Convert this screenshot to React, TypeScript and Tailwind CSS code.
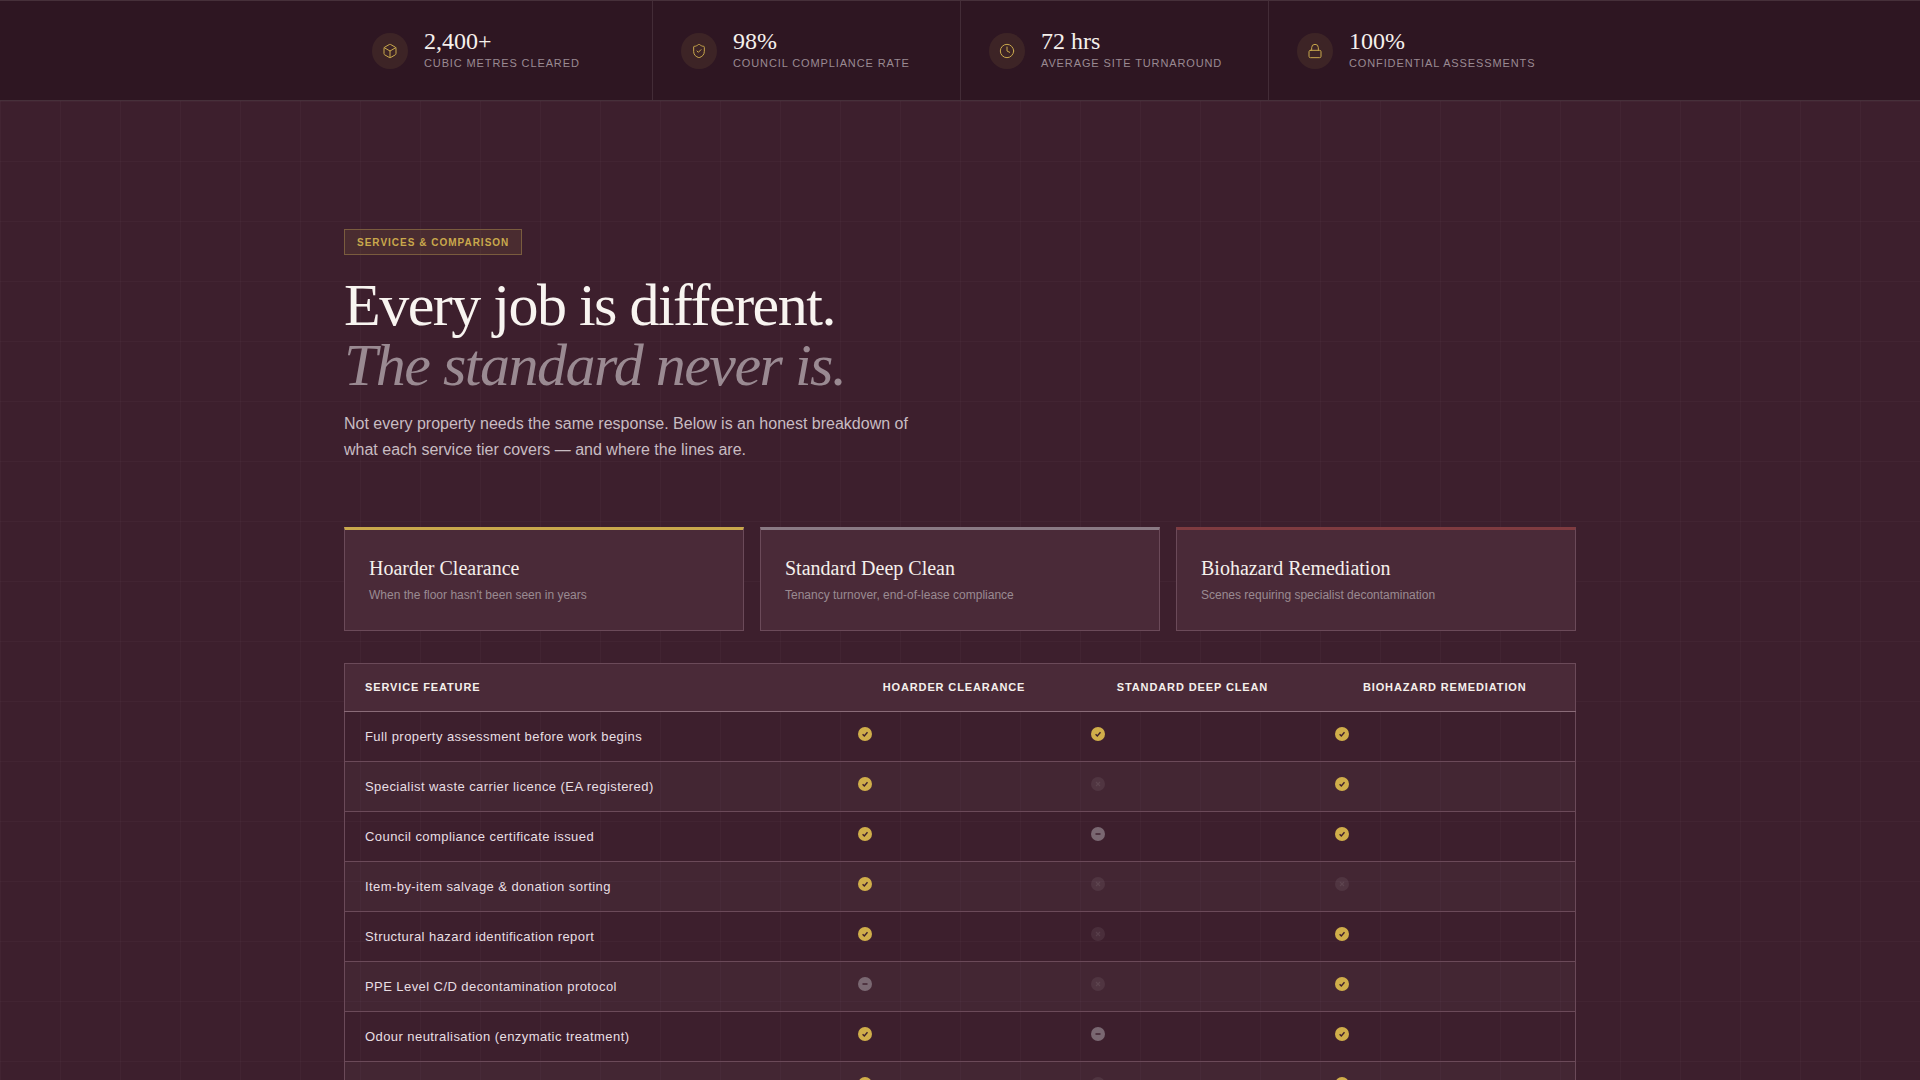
import { Box, ShieldCheck, Clock, Lock } from 'lucide-react';

const stats = [
  { icon: Box, value: '2,400+', label: 'Cubic metres cleared' },
  { icon: ShieldCheck, value: '98%', label: 'Council compliance rate' },
  { icon: Clock, value: '72 hrs', label: 'Average site turnaround' },
  { icon: Lock, value: '100%', label: 'Confidential assessments' },
];

const tiers = [
  { title: 'Hoarder Clearance', desc: "When the floor hasn't been seen in years", bar: 'border-t-[#c9a84c]' },
  { title: 'Standard Deep Clean', desc: 'Tenancy turnover, end-of-lease compliance', bar: 'border-t-[#8a7a84]' },
  { title: 'Biohazard Remediation', desc: 'Scenes requiring specialist decontamination', bar: 'border-t-[#7f3b40]' },
];

type Mark = 'yes' | 'part' | 'no';

const rows: { name: string; marks: Mark[] }[] = [
  { name: 'Full property assessment before work begins', marks: ['yes', 'yes', 'yes'] },
  { name: 'Specialist waste carrier licence (EA registered)', marks: ['yes', 'no', 'yes'] },
  { name: 'Council compliance certificate issued', marks: ['yes', 'part', 'yes'] },
  { name: 'Item-by-item salvage & donation sorting', marks: ['yes', 'no', 'no'] },
  { name: 'Structural hazard identification report', marks: ['yes', 'no', 'yes'] },
  { name: 'PPE Level C/D decontamination protocol', marks: ['part', 'no', 'yes'] },
  { name: 'Odour neutralisation (enzymatic treatment)', marks: ['yes', 'part', 'yes'] },
  { name: 'Post-clearance deep sanitisation', marks: ['yes', 'no', 'yes'] },
];

function MarkIcon({ mark }: { mark: Mark }) {
  if (mark === 'yes') {
    return (
      <svg viewBox="0 0 14 14" className="mb-1.5 h-3.5 w-3.5">
        <circle cx="7" cy="7" r="7" fill="#d0ae4a" />
        <path d="M4.6 7.2l1.7 1.7 3.2-3.6" fill="none" stroke="#3d1f2d" strokeWidth="1.4" />
      </svg>
    );
  }
  if (mark === 'part') {
    return (
      <svg viewBox="0 0 14 14" className="mb-1.5 h-3.5 w-3.5">
        <circle cx="7" cy="7" r="7" fill="#7a6872" />
        <path d="M4.5 7h5" fill="none" stroke="#3d1f2d" strokeWidth="1.4" />
      </svg>
    );
  }
  return (
    <svg viewBox="0 0 14 14" className="mb-1.5 h-3.5 w-3.5">
      <circle cx="7" cy="7" r="7" fill="#ffffff" fillOpacity="0.07" />
      <path d="M5 5l4 4M9 5l-4 4" fill="none" stroke="#ffffff" strokeOpacity="0.08" strokeWidth="1.2" />
    </svg>
  );
}

export default function App() {
  return (
    <div className="min-h-screen bg-[#3d1f2d] bg-[linear-gradient(rgba(255,255,255,0.025)_1px,transparent_1px),linear-gradient(90deg,rgba(255,255,255,0.025)_1px,transparent_1px)] bg-[size:60px_60px] bg-[position:0_41px] font-['Liberation_Sans',sans-serif]">
      <div className="border-y border-[#46303a] bg-[#2d1622]/95">
        <div className="mx-auto grid h-[99px] max-w-[1232px] grid-cols-[309px_308px_308px_1fr]">
          {stats.map((s, i) => (
            <div
              key={s.label}
              className={`flex items-center gap-4 pl-7 ${i < 3 ? 'border-r border-[#432c37]' : ''}`}
            >
              <div className="flex h-9 w-9 shrink-0 items-center justify-center rounded-full bg-[#c9a84c]/10">
                <s.icon className="h-4 w-4 text-[#c9a84c]" strokeWidth={1.5} />
              </div>
              <div className="-mt-[3px]">
                <div className="font-['Liberation_Serif',serif] text-2xl leading-[28px] text-[#f5f0ec]">{s.value}</div>
                <div className="text-[11px] uppercase leading-4 tracking-[0.08em] text-[#9a8a92]">{s.label}</div>
              </div>
            </div>
          ))}
        </div>
      </div>

      <main className="mx-auto max-w-[1232px] pt-32 pb-20">
        <span className="inline-block border border-[#7a5c3e] bg-[#c9a84c]/10 px-3 pt-1.5 pb-1 text-[10px] font-bold uppercase leading-[14px] tracking-[1px] text-[#c9a84c]">
          Services &amp; Comparison
        </span>
        <h1 className="mt-5 font-['Liberation_Serif',serif] text-[60px] font-normal leading-[60px] tracking-[-1.5px] text-[#f8f4f0]">
          Every job is different.
          <br />
          <em className="text-[#9a8a92]">The standard never is.</em>
        </h1>
        <p className="mt-4 max-w-[580px] text-base leading-[26px] text-[#c8bcc2]">
          Not every property needs the same response. Below is an honest breakdown of what each service tier covers — and where the lines are.
        </p>

        <div className="mt-16 grid grid-cols-3 gap-4">
          {tiers.map((t) => (
            <div key={t.title} className={`h-[104px] border border-t-[3px] border-[#6b4a59] bg-[#4a2a38] p-6 ${t.bar}`}>
              <h3 className="font-['Liberation_Serif',serif] text-xl font-normal leading-7 text-[#f5f0ec]">{t.title}</h3>
              <p className="mt-[3px] text-xs leading-5 text-[#9a8a92]">{t.desc}</p>
            </div>
          ))}
        </div>

        <table className="mt-8 w-full table-fixed border-collapse border border-[#6b4a59]">
          <colgroup>
            <col className="w-[493px]" />
            <col className="w-[233px]" />
            <col className="w-[244px]" />
            <col />
          </colgroup>
          <thead>
            <tr className="h-12 border-b border-[#8a6b78] bg-[#4a2a38] text-[11px] font-bold uppercase tracking-[0.08em] text-[#f5f0ec]">
              <th className="px-5 text-left">Service Feature</th>
              <th className="px-5 text-center">Hoarder Clearance</th>
              <th className="px-5 text-center">Standard Deep Clean</th>
              <th className="px-5 text-center">Biohazard Remediation</th>
            </tr>
          </thead>
          <tbody>
            {rows.map((r, i) => (
              <tr key={r.name} className={`h-[50px] border-b border-[#6b4a59] ${i % 2 === 1 ? 'bg-white/[0.03]' : ''}`}>
                <td className="px-5 text-[13px] tracking-[0.43px] text-[#e8dfe3]">{r.name}</td>
                {r.marks.map((m, j) => (
                  <td key={j} className="px-5">
                    <MarkIcon mark={m} />
                  </td>
                ))}
              </tr>
            ))}
          </tbody>
        </table>
      </main>
    </div>
  );
}
